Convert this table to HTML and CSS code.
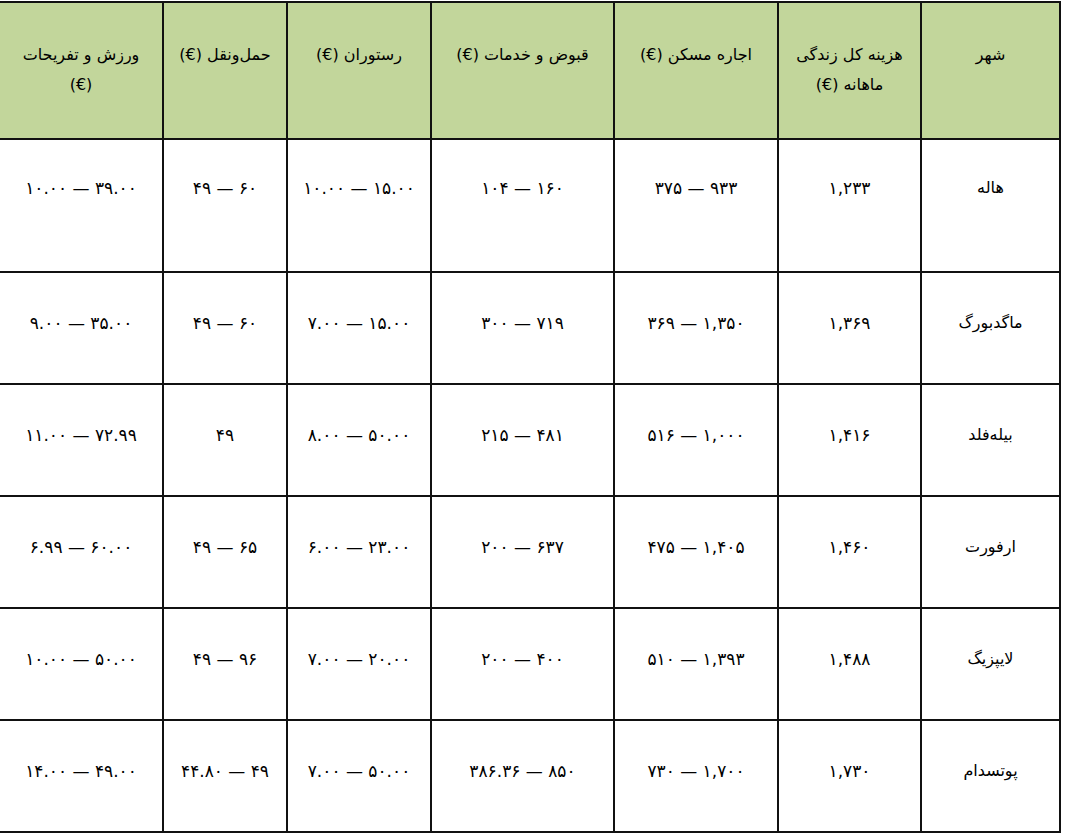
FILE: index.html
```html
<!DOCTYPE html>
<html lang="fa" dir="rtl">
<head>
<meta charset="utf-8">
<title>هزینه زندگی</title>
<link rel="stylesheet" href="styles.css">
</head>
<body>
<table class="cost-table">
  <colgroup>
    <col class="c-city">
    <col class="c-total">
    <col class="c-rent">
    <col class="c-bills">
    <col class="c-rest">
    <col class="c-trans">
    <col class="c-sport">
  </colgroup>
  <thead>
    <tr class="head-row">
      <th>شهر</th>
      <th>هزینه کل زندگی<br>ماهانه (€)</th>
      <th>اجاره مسکن (€)</th>
      <th>قبوض و خدمات (€)</th>
      <th>رستوران (€)</th>
      <th>حمل‌ونقل (€)</th>
      <th>ورزش و تفریحات<br>(€)</th>
    </tr>
  </thead>
  <tbody>
    <tr class="row-first">
      <td>هاله</td>
      <td><span class="num" dir="ltr">۱,۲۳۳</span></td>
      <td><span class="num" dir="ltr">۳۷۵ — ۹۳۳</span></td>
      <td><span class="num" dir="ltr">۱۰۴ — ۱۶۰</span></td>
      <td><span class="num" dir="ltr">۱۰.۰۰ — ۱۵.۰۰</span></td>
      <td><span class="num" dir="ltr">۴۹ — ۶۰</span></td>
      <td><span class="num" dir="ltr">۱۰.۰۰ — ۳۹.۰۰</span></td>
    </tr>
    <tr class="row">
      <td>ماگدبورگ</td>
      <td><span class="num" dir="ltr">۱,۳۶۹</span></td>
      <td><span class="num" dir="ltr">۳۶۹ — ۱,۳۵۰</span></td>
      <td><span class="num" dir="ltr">۳۰۰ — ۷۱۹</span></td>
      <td><span class="num" dir="ltr">۷.۰۰ — ۱۵.۰۰</span></td>
      <td><span class="num" dir="ltr">۴۹ — ۶۰</span></td>
      <td><span class="num" dir="ltr">۹.۰۰ — ۳۵.۰۰</span></td>
    </tr>
    <tr class="row">
      <td>بیله‌فلد</td>
      <td><span class="num" dir="ltr">۱,۴۱۶</span></td>
      <td><span class="num" dir="ltr">۵۱۶ — ۱,۰۰۰</span></td>
      <td><span class="num" dir="ltr">۲۱۵ — ۴۸۱</span></td>
      <td><span class="num" dir="ltr">۸.۰۰ — ۵۰.۰۰</span></td>
      <td><span class="num" dir="ltr">۴۹</span></td>
      <td><span class="num" dir="ltr">۱۱.۰۰ — ۷۲.۹۹</span></td>
    </tr>
    <tr class="row">
      <td>ارفورت</td>
      <td><span class="num" dir="ltr">۱,۴۶۰</span></td>
      <td><span class="num" dir="ltr">۴۷۵ — ۱,۴۰۵</span></td>
      <td><span class="num" dir="ltr">۲۰۰ — ۶۳۷</span></td>
      <td><span class="num" dir="ltr">۶.۰۰ — ۲۳.۰۰</span></td>
      <td><span class="num" dir="ltr">۴۹ — ۶۵</span></td>
      <td><span class="num" dir="ltr">۶.۹۹ — ۶۰.۰۰</span></td>
    </tr>
    <tr class="row">
      <td>لایپزیگ</td>
      <td><span class="num" dir="ltr">۱,۴۸۸</span></td>
      <td><span class="num" dir="ltr">۵۱۰ — ۱,۳۹۳</span></td>
      <td><span class="num" dir="ltr">۲۰۰ — ۴۰۰</span></td>
      <td><span class="num" dir="ltr">۷.۰۰ — ۲۰.۰۰</span></td>
      <td><span class="num" dir="ltr">۴۹ — ۹۶</span></td>
      <td><span class="num" dir="ltr">۱۰.۰۰ — ۵۰.۰۰</span></td>
    </tr>
    <tr class="row">
      <td>پوتسدام</td>
      <td><span class="num" dir="ltr">۱,۷۳۰</span></td>
      <td><span class="num" dir="ltr">۷۳۰ — ۱,۷۰۰</span></td>
      <td><span class="num" dir="ltr">۳۸۶.۳۶ — ۸۵۰</span></td>
      <td><span class="num" dir="ltr">۷.۰۰ — ۵۰.۰۰</span></td>
      <td><span class="num" dir="ltr">۴۴.۸۰ — ۴۹</span></td>
      <td><span class="num" dir="ltr">۱۴.۰۰ — ۴۹.۰۰</span></td>
    </tr>
  </tbody>
</table>
</body>
</html>
```
FILE: styles.css
```css
html, body {
  margin: 0;
  padding: 0;
  background: #ffffff;
}

body {
  font-family: "DejaVu Sans", "Noto Sans", sans-serif;
  color: #000000;
  padding: 1px 0 0 0;
}

.cost-table {
  border-collapse: collapse;
  table-layout: fixed;
  width: 1061px;
  margin: 0 9px 0 0;
  font-size: 16px;
}

.c-city  { width: 139px; }
.c-total { width: 143px; }
.c-rent  { width: 164px; }
.c-bills { width: 183px; }
.c-rest  { width: 144px; }
.c-trans { width: 124px; }
.c-sport { width: 164px; }

.cost-table th,
.cost-table td {
  border: 2px solid #111111;
  text-align: center;
  vertical-align: top;
  padding: 37px 4px 0 4px;
  font-weight: normal;
}

.cost-table th {
  background: #c2d69b;
  line-height: 30px;
  padding-top: 37px;
}

.cost-table td {
  line-height: 24px;
  padding-top: 38px;
}

.head-row { height: 137px; }
.row-first { height: 133px; }
.row { height: 112px; }

.row-first td { padding-top: 36px; }

.num {
  unicode-bidi: isolate;
  white-space: nowrap;
  font-size: 17px;
}
```
